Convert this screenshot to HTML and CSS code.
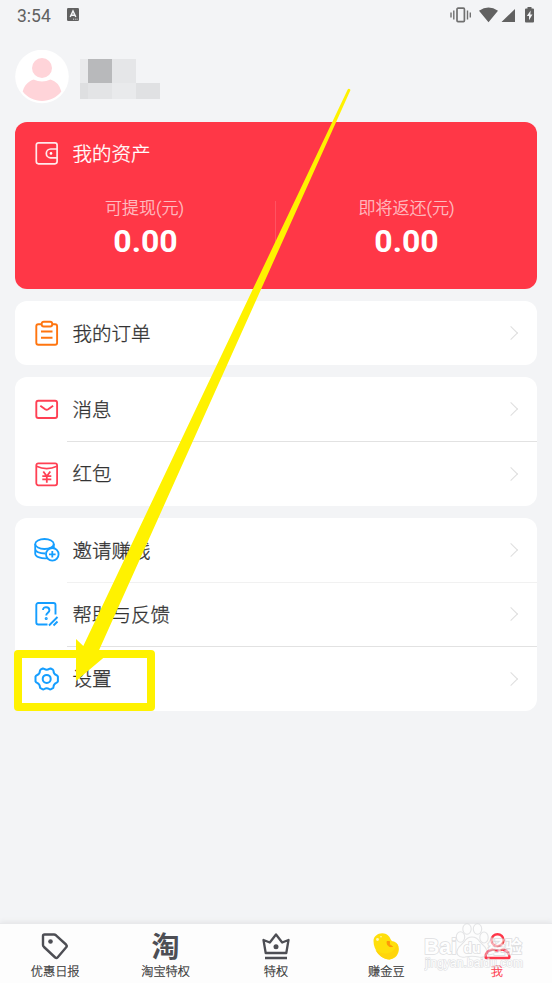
FILE: index.html
```html
<!DOCTYPE html>
<html lang="zh-CN">
<head>
<meta charset="utf-8">
<title>我的</title>
<link rel="stylesheet" href="styles.css">
</head>
<body>
<div class="app">
  <header class="status">
    <span class="time">3:54</span>
    <svg class="ime" width="12" height="13" viewBox="0 0 12 13"><rect width="12" height="13" rx="1.2" fill="#616161"/><path d="M3.2 9 6 3l2.8 6M4.2 7.2h3.6" fill="none" stroke="#f3f4f6" stroke-width="1.5"/><path d="M6 11.2h5" stroke="#ddd" stroke-dasharray="1 .8"/></svg>
    <svg class="signals" width="86" height="16" viewBox="0 0 86 16" fill="#616161">
      <rect x="7" y="1.2" width="7.4" height="13.4" rx="1" fill="none" stroke="#707070" stroke-width="1.7"/>
      <path d="M1 5.5v5M3.8 3.5v9M17.5 3.5v9M20.3 5.500v5" stroke="#707070" stroke-width="1.4"/>
      <path d="M29 3.800q9.500-6.600 19 0L38.500 15.200zM65 2v13H51.500z"/>
      <path d="M77.500 1.500V0h4v1.500h1.500q1 0 1 1v12q0 1-1 1h-7q-1 0-1-1v-12q0-1 1-1z"/><path d="M80.700 3.500 76.800 9h2.200v4.200L82.500 7.500h-2.200z" fill="#f3f4f6"/>
    </svg>
  </header>
  <section class="profile">
    <svg width="54" height="54" viewBox="0 0 54 54"><circle cx="27" cy="26.500" r="26.800" fill="#fff"/><circle cx="27" cy="18" r="10" fill="#ffd4d9"/><path d="M18.500 29.500q8.500 4 17 0Q44 32 46.300 41.500C37 54 17 54 7.700 41.500 10 32 18.500 29.500 18.500 29.500z" fill="#ffd4d9"/></svg>
    <svg width="80" height="40" viewBox="0 0 80 40" shape-rendering="crispEdges"><path d="M0 0h8v24H0z" fill="#e9eaec"/><path d="M8 0h24v24H8z" fill="#b8b9bb"/><path d="M32 0h24v24H32z" fill="#e5e6e8"/><path d="M0 24h8v16H0z" fill="#dedfe1"/><path d="M8 24h24v16H8z" fill="#e3e4e6"/><path d="M32 24h24v16H32z" fill="#e9eaec"/><path d="M56 24h24v16H56z" fill="#e0e1e3"/></svg>
  </section>
  <main>
    <section class="assets">
      <div class="assets-title">
        <svg class="icon" viewBox="0 0 26 26"><g fill="none" stroke="#ffe9eb" stroke-width="1.700"><rect x="2.300" y="2.800" width="20.800" height="21" rx="2.200"/><path d="M23 9h-6.300a4.400 4.400 0 0 0 0 8.800H23"/></g><circle cx="17" cy="13.400" r="1.300" fill="#fff"/></svg>
        <span>我的资产</span>
      </div>
      <div class="balances">
        <div class="balance"><span class="caption">可提现(元)</span><strong>0.00</strong></div>
        <div class="balance"><span class="caption">即将返还(元)</span><strong>0.00</strong></div>
      </div>
    </section>
    <section class="card">
      <div class="row"><svg class="icon" viewBox="0 0 26 26" fill="none" stroke="#ff750f" stroke-width="1.900"><path d="M8 4.300H4.300a2 2 0 0 0-2 2v16.500a2 2 0 0 0 2 2h16.800a2 2 0 0 0 2-2V6.300a2 2 0 0 0-2-2H18M7 11.500h11.500M7 17.700h11.500"/><rect x="7.700" y="1.700" width="10.500" height="4.800" rx="2"/></svg><span>我的订单</span><i class="chevron"></i></div>
    </section>
    <section class="card">
      <div class="row"><svg class="icon" viewBox="0 0 26 26" fill="none" stroke="#ff4054" stroke-width="1.900"><rect x="2.300" y="4.800" width="20.800" height="17.200" rx="2"/><path d="M6.300 9.700l4.900 3.600q1.500 1 3 0l4.900-3.600"/></svg><span>消息</span><i class="chevron"></i></div>
      <div class="row ruled"><svg class="icon" viewBox="0 0 26 26" fill="none" stroke="#ff4054" stroke-width="1.800"><rect x="2.300" y="2.300" width="20.800" height="22" rx="2"/><path d="M2.500 5.300q10.200 4.800 20.400 0M9.300 10.500l3.500 4.700 3.500-4.700M12.800 15.200v6.500M8.300 15.100h9M8.300 18.400h9"/></svg><span>红包</span><i class="chevron"></i></div>
    </section>
    <section class="card">
      <div class="row"><svg class="icon" viewBox="0 0 26 26" fill="none" stroke="#159eff" stroke-width="1.800"><ellipse cx="10.500" cy="7" rx="9.300" ry="5"/><path d="M1.200 7v5c0 2.700 4.200 4.500 10 4.500M19.800 7v4M1.200 12v4.500c0 3.500 6.500 5.500 12.500 4.700"/><circle cx="18.300" cy="17.300" r="6.300" fill="#fff"/><path d="M18.300 14v6.600M15 17.300h6.600"/></svg><span>邀请赚钱</span><i class="chevron"></i></div>
      <div class="row ruled faint"><svg class="icon" viewBox="0 0 26 26" fill="none" stroke="#159eff" stroke-width="1.900"><path d="M21.500 13.500V4a2 2 0 0 0-2-2H4.300a2 2 0 0 0-2 2V21.500a2 2 0 0 0 2 2H13.500M15 24.500l8.500-8.500M19.500 24.500l4-4M9 9c0-4 6.400-3.500 6.400.2 0 2.500-3.200 2.500-3.200 5.300"/><circle cx="12.200" cy="17.500" r=".6"/></svg><span>帮助与反馈</span><i class="chevron"></i></div>
      <div class="row ruled"><svg class="icon" viewBox="0 0 26 26" fill="none" stroke="#159eff" stroke-width="2" stroke-linejoin="round"><path d="M8.800 2.500Q9.500 2.300 10.200 2.900 12.700 4.700 15.200 2.900 15.900 2.300 16.600 2.500L18.900 3.700Q19.500 4.200 19.500 5 19.600 8 22.200 9 23.600 9.600 23.900 10.500V15.300Q23.500 16.300 22.300 16.800 19.600 18 19.500 20.700 19.500 21.800 18.900 22.200L16.600 23.400Q15.900 23.600 15.200 23 12.700 21.300 10.200 23 9.500 23.600 8.800 23.400L6.500 22.200Q5.900 21.800 5.900 20.700 5.800 18 3.100 16.800 1.900 16.300 1.500 15.300V10.500Q1.800 9.600 3.200 9 5.800 8 5.900 5 5.900 4.200 6.500 3.700z"/><circle cx="12.700" cy="12.900" r="4"/></svg><span>设置</span><i class="chevron"></i></div>
    </section>
  </main>
  <nav>
    <div class="tab"><svg viewBox="0 0 30 30" fill="none" stroke="#4d4e54" stroke-width="2.400" stroke-linejoin="round"><path d="M3 5Q3 3.500 4.500 3.500H14Q15 3.500 16 4.300L26 13.500Q27.500 15 26 16.500L17.500 26.500Q16.500 27.500 15.200 26.500L4 16Q3 15 3 14z"/><circle cx="10.500" cy="10.500" r="2.300" fill="#4d4e54" stroke="none"/></svg><span>优惠日报</span></div>
    <div class="tab"><b class="tao">淘</b><span>淘宝特权</span></div>
    <div class="tab"><svg viewBox="0 0 30 30" fill="none" stroke="#4d4e54" stroke-width="2.300" stroke-linejoin="round"><path d="M2.500 9 8.800 11.500 15 3.500l6.200 8L27.500 9l-2.200 13H4.700zM4 27h22"/><circle cx="15" cy="15.700" r="2.500" fill="#4d4e54" stroke="none"/></svg><span>特权</span></div>
    <div class="tab"><svg viewBox="0 0 30 30"><path d="M2.500 10C2.500 3 13-1 18.500 6c1.500 3 2 4.500 4.500 4.500C31 13 29 28 18.500 28.500 10 28.500 2.500 19 2.500 10z" fill="#ffdf0b"/><path d="M25.500 12C29 17 27 27 18.500 28.500 12 28 7 24 4.500 19 14 26 25 22 25.500 12z" fill="#ffd50b"/><path d="M16 10.500q0 6 5.500 5-3.800-1.200-3-5z" fill="#ff9808" stroke="#ff9808"/><circle cx="6.500" cy="8.500" r="1.400" fill="#fff7b8"/><circle cx="10" cy="5.800" r=".8" fill="#fff7b8"/></svg><span>赚金豆</span></div>
    <div class="tab active"><svg viewBox="0 0 30 30" fill="none" stroke="#ff3548" stroke-width="2.400" stroke-linejoin="round"><circle cx="15.500" cy="9.200" r="6"/><path d="M10.500 18.500Q15.500 20.500 20.500 18.500 27.500 20 27.500 26 27.500 27 26.500 27H4.500Q3.500 27 3.500 26 3.500 20 10.500 18.500z"/></svg><span>我</span></div>
  </nav>
  <div class="highlight"></div>
  <svg class="arrow" width="552" height="983" viewBox="0 0 552 983"><path d="M347.700 89.500 83.300 646 76 639V681L108 654 98 652.500 350.500 90Q349 88 347.700 89.500z" fill="#fff200"/></svg>
  <div class="watermark">
    <svg width="104" height="56" viewBox="0 0 104 56">
      <g fill="#fff" fill-opacity=".5" stroke="#d3d4d7" stroke-width="1.100"><ellipse cx="36.500" cy="19" rx="4.200" ry="5.300"/><ellipse cx="43" cy="11" rx="4.200" ry="5.300"/><ellipse cx="53.500" cy="11" rx="4.200" ry="5.300"/><ellipse cx="60" cy="19.500" rx="4.200" ry="5.500"/><path d="M48 19q5 0 8 5l5 5c5 8 0 11-6 10-5-1-9-1-14 0-6 1-11-3-6-10l5-5q3-5 8-5z"/></g>
      <g fill="#fff" stroke="#c9cacd" stroke-width="1.600" paint-order="stroke"><text class="brand" x="0" y="36" textLength="33" lengthAdjust="spacingAndGlyphs">Bai</text><text class="du" x="39.500" y="35">du</text><text class="exp" x="64" y="35">经验</text><text class="domain" x="1" y="49" textLength="98" stroke-width="1.200">jingyan.baidu.com</text></g>
    </svg>
  </div>
</div>
</body>
</html>
```
FILE: styles.css
```css
* { box-sizing: border-box; }
body { margin: 0; background: #f3f4f6; color: #333; font-family: Roboto, "Noto Sans CJK SC", sans-serif; }
.app { position: relative; display: flex; flex-direction: column; width: 552px; height: 983px; overflow: hidden; }
.status { display: flex; height: 50px; align-items: flex-start; padding: 7px 16px 0 17px; color: #616161; }
.time { font-size: 17.5px; line-height: 18px; width: 50px; }
.ime { margin-top: 1px; }
.signals { margin-left: auto; }
.profile { display: flex; align-items: flex-start; gap: 11px; height: 72px; padding-left: 15px; }
.profile svg + svg { margin-top: 9px; }
main { display: flex; flex-direction: column; gap: 12px; padding: 0 15px; }
.assets { height: 167px; border-radius: 12px; background: #ff3747; color: #fff; }
.assets-title { display: flex; align-items: center; height: 62px; padding-left: 19px; gap: 12.5px; font-size: 19.5px; font-weight: 300; -webkit-text-stroke: .3px; }
.assets-title span, .row span { padding-bottom: 2px; }
.icon { width: 26px; height: 26px; flex: none; }
.balances { display: grid; grid-template-columns: 1fr 1fr; padding-top: 13px; }
.balance { display: flex; flex-direction: column; align-items: center; height: 74px; }
.balance:first-child { background: linear-gradient(#ff5361, #ff5361) 100% 4px / 1.5px 46px no-repeat; }
.caption { font-size: 17px; line-height: 22px; color: #ffc3c8; font-weight: 300; -webkit-text-stroke: .25px; }
.balance:first-child .caption { margin-left: -2px; }
.balance strong { font-size: 32px; line-height: 38px; margin-top: 3px; }
.card { border-radius: 12px; background: #fff; }
.row { position: relative; display: flex; align-items: center; height: 64.3px; padding: 0 18px 0 19px; gap: 12.5px; font-size: 19.5px; font-weight: 300; -webkit-text-stroke: .3px; }
.ruled::before { content: ""; position: absolute; left: 52px; right: 0; top: -.5px; height: 1px; background: #e2e2e2; }
.faint::before { background: #f1f1f1; }
.chevron { width: 10px; height: 10px; margin-left: auto; margin-right: 3px; border: solid #dedede; border-width: 1.4px 1.4px 0 0; transform: rotate(45deg); }
nav { display: grid; grid-template-columns: repeat(5, 1fr); height: 60px; margin-top: auto; background: #fdfdfd; border-top: 1px solid #e8e9eb; box-shadow: 0 -1px 5px #e3e4e6; }
.tab { display: flex; flex-direction: column; align-items: center; padding-top: 7px; font-size: 12.2px; line-height: 18px; color: #333; }
.tab span { font-weight: 300; -webkit-text-stroke: .25px; }
.tab svg { width: 30px; height: 30px; margin-bottom: 2px; }
.tao { height: 32px; font: 700 28px/28px "Noto Sans CJK SC", sans-serif; color: #4d4e54; }
.active, .active span { color: #ff3548; }
.highlight { position: absolute; left: 14px; top: 650px; width: 141px; height: 61px; border: 8px solid #fff200; border-radius: 4px; }
.arrow { position: absolute; inset: 0; }
.watermark { position: absolute; left: 424px; top: 918px; opacity: .6; }
.brand { font: 700 22.5px "Liberation Sans", sans-serif; }
.du { font: 700 14px "Liberation Sans", sans-serif; }
.exp { font: 700 17px "Noto Sans CJK SC", sans-serif; }
.domain { font: 12px "Liberation Sans", sans-serif; }
```
